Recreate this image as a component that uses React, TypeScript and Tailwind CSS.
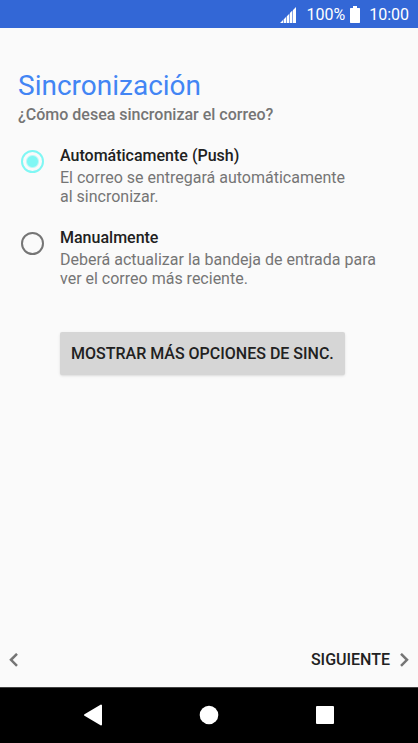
import { useState } from 'react'

const options = [
  {
    id: 'push',
    title: 'Automáticamente (Push)',
    lines: ['El correo se entregará automáticamente', 'al sincronizar.'],
  },
  {
    id: 'manual',
    title: 'Manualmente',
    lines: ['Deberá actualizar la bandeja de entrada para', 'ver el correo más reciente.'],
  },
]

function StatusBar() {
  return (
    <header className="flex h-7 items-center justify-end bg-[#3367d6] pt-px pr-[9px] text-base text-white">
      {/* Signal */}
      <svg className="mr-[10px] h-4 w-4" viewBox="0 0 16 16" fill="currentColor" aria-hidden="true">
        <path d="M0 16l3-3v3zM3.6 16v-3.6L6.2 9.8V16zM6.8 16V9.2l2.5-2.5V16zM9.9 16V6.1l2.5-2.5V16zM13 16V3l3-3v16z" />
      </svg>
      <span>100%</span>
      {/* Battery */}
      <svg className="mr-2 ml-1 h-[17px] w-3" viewBox="0 0 12 17" fill="currentColor" aria-hidden="true">
        <path d="M4 0h4v2h2.5l.5.5v14l-.5.5h-9l-.5-.5v-14l.5-.5H4z" />
      </svg>
      <span>10:00</span>
    </header>
  )
}

function NavigationBar() {
  return (
    <nav className="flex h-14 items-center justify-around border-t border-[#424242] bg-black px-[35px] pb-px text-white">
      <button type="button" aria-label="Atrás">
        <svg className="h-6 w-6" viewBox="0 0 24 24" fill="currentColor">
          <path d="M4 12L20 2.5v19z" stroke="currentColor" strokeWidth="2" strokeLinejoin="round" />
        </svg>
      </button>
      <button type="button" aria-label="Inicio">
        <svg className="h-6 w-6" viewBox="0 0 24 24" fill="currentColor">
          <circle cx="12" cy="12" r="9.3" />
        </svg>
      </button>
      <button type="button" aria-label="Recientes">
        <svg className="h-6 w-6" viewBox="0 0 24 24" fill="currentColor">
          <rect x="3" y="3" width="18" height="18" rx="1" />
        </svg>
      </button>
    </nav>
  )
}

export default function App() {
  const [selected, setSelected] = useState('push')

  return (
    <div className="flex min-h-screen flex-col bg-[#fafafa] font-[Roboto,sans-serif]">
      <StatusBar />
      <main className="flex-1 pt-[41px]">
        <h1 className="px-[18px] text-[28px] leading-[34px] text-[#4285f4]">Sincronización</h1>
        <fieldset>
          <legend className="px-[18px] text-base leading-6 font-medium text-[#757575]">
            ¿Cómo desea sincronizar el correo?
          </legend>
          <div className="mt-[17px] flex flex-col gap-5">
            {options.map((option) => (
              <label key={option.id} className="flex pr-4 pl-[21px]">
                <input
                  type="radio"
                  name="sync"
                  checked={selected === option.id}
                  onChange={() => setSelected(option.id)}
                  className="mt-[6px] mr-4 h-[23px] w-[23px] shrink-0 appearance-none rounded-full border-2 border-[#757575] checked:border-[#80f7f4] checked:bg-[radial-gradient(circle,#80f7f4_5px,transparent_7px)]"
                />
                <span className="text-base leading-[19px] text-[#757575]">
                  <span className="block leading-6 font-medium text-[#212121]">{option.title}</span>
                  {option.lines.map((line) => (
                    <span key={line} className="block">{line}</span>
                  ))}
                </span>
              </label>
            ))}
          </div>
        </fieldset>
        <button
          type="button"
          className="mt-11 ml-15 h-[43px] rounded-xs bg-[#d6d6d6] px-[11px] text-base font-medium text-[#212121] shadow"
        >
          MOSTRAR MÁS OPCIONES DE SINC.
        </button>
      </main>
      <footer className="flex h-[54px] items-center justify-between px-2">
        <button type="button" aria-label="Anterior" className="text-[#757575]">
          <svg className="h-[14px] w-3" viewBox="0 0 12 14" fill="none" stroke="currentColor" strokeWidth="2.5">
            <path d="M9 .8L3 6.8l6 6" />
          </svg>
        </button>
        <button type="button" className="flex items-center gap-2 font-medium text-[#212121]">
          SIGUIENTE
          <svg className="h-[14px] w-3 text-[#757575]" viewBox="0 0 12 14" fill="none" stroke="currentColor" strokeWidth="2.5">
            <path d="M3 .8l6 6-6 6" />
          </svg>
        </button>
      </footer>
      <NavigationBar />
    </div>
  )
}
